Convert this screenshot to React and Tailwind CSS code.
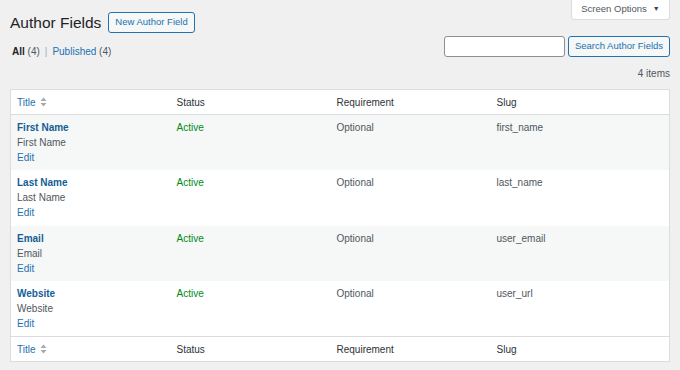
import React from 'react'

const fields = [
  { name: 'First Name', slug: 'first_name' },
  { name: 'Last Name', slug: 'last_name' },
  { name: 'Email', slug: 'user_email' },
  { name: 'Website', slug: 'user_url' },
]

const SortIcon = () => (
  <svg width="7" height="10" viewBox="0 0 7 10" className="ml-[4px] inline-block">
    <path d="M3.5 0.5 L6.5 4 L0.5 4 Z" fill="#a7aaad" />
    <path d="M3.5 9.5 L6.5 6 L0.5 6 Z" fill="#a7aaad" />
  </svg>
)

const HeadRow = ({ top }) => (
  <tr className={top ? 'border-b border-[#dcdcde]' : 'border-t border-[#dcdcde]'}>
    <th className="h-[25px] w-[160px] pl-[6px] text-left font-normal">
      <span className="inline-flex items-center text-[#2271b1]">
        Title
        <SortIcon />
      </span>
    </th>
    <th className="w-[160px] pl-[6px] text-left font-normal text-[#2c3338]">Status</th>
    <th className="w-[160px] pl-[6px] text-left font-normal text-[#2c3338]">Requirement</th>
    <th className="pl-[6px] text-left font-normal text-[#2c3338]">Slug</th>
  </tr>
)

const App = () => {
  return (
    <div className="relative min-h-[370px] w-full bg-[#f0f0f1] px-[10px] font-['Liberation_Sans',Arial,sans-serif] text-[10px] text-[#50575e]">
      {/* screen options tab */}
      <div className="absolute right-[10px] top-0 flex h-[20px] w-[99px] items-center justify-center gap-[6px] rounded-b-[3px] border border-t-0 border-[#dcdcde] bg-white text-[9.5px] text-[#50575e]">
        Screen Options
        <span className="text-[7px] text-[#3c434a]">▼</span>
      </div>

      <div className="flex items-center pt-[12px]">
        <h1 className="text-[15.5px] leading-[21px] text-[#1d2327]">Author Fields</h1>
        <button className="ml-[7px] h-[21px] rounded-[3px] border border-[#2271b1] bg-[#f6f7f7] px-[6px] text-[9.5px] text-[#2271b1]">
          New Author Field
        </button>
      </div>

      <div className="mt-[3px] flex items-start justify-between">
        <div className="mt-[8px] pl-[2px] leading-[15px] text-[#50575e]">
          <span className="font-bold text-[#1d2327]">All</span> (4)
          <span className="mx-[5px] text-[#a7aaad]">|</span>
          <span className="text-[#2271b1]">Published</span> (4)
        </div>
        <div className="flex gap-[3px]">
          <input className="h-[21px] w-[121px] rounded-[3px] border border-[#8c8f94] bg-white" />
          <button className="h-[21px] w-[102px] rounded-[3px] border border-[#2271b1] bg-[#f6f7f7] text-[9.5px] text-[#2271b1]">
            Search Author Fields
          </button>
        </div>
      </div>

      <div className="mt-[8px] text-right leading-[14px] text-[#50575e]">4 items</div>

      <table className="mt-[8px] w-full table-fixed border-collapse border border-[#dcdcde] bg-white">
        <thead>
          <HeadRow top />
        </thead>
        <tbody>
          {fields.map((f, i) => (
            <tr key={f.slug} className={i % 2 === 0 ? 'bg-[#f6f7f7]' : 'bg-white'}>
              <td className="h-[55.5px] pl-[6px] pt-[5px] align-top leading-[15px]">
                <div className="font-bold text-[#135e96]">{f.name}</div>
                <div className="text-[#50575e]">{f.name}</div>
                <div className="text-[#2271b1]">Edit</div>
              </td>
              <td className="pl-[6px] pt-[5px] align-top leading-[15px] text-[#008a20]">Active</td>
              <td className="pl-[6px] pt-[5px] align-top leading-[15px] text-[#50575e]">Optional</td>
              <td className="pl-[6px] pt-[5px] align-top leading-[15px] text-[#50575e]">{f.slug}</td>
            </tr>
          ))}
        </tbody>
        <tfoot>
          <HeadRow />
        </tfoot>
      </table>
    </div>
  )
}

export default App
